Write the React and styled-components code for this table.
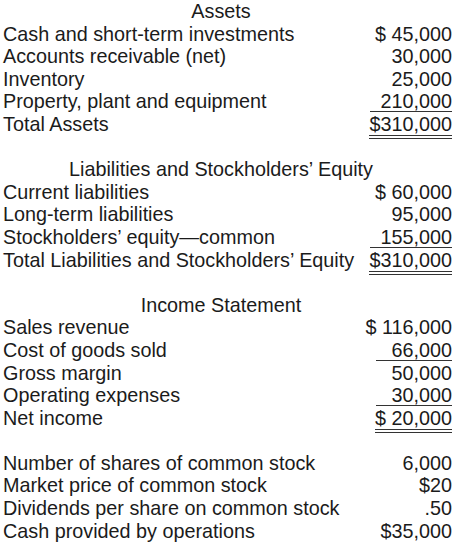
import React from 'react';
import styled, { createGlobalStyle } from 'styled-components';

const GlobalStyle = createGlobalStyle`
  body {
    margin: 0;
    background: #fff;
  }
`;

const Sheet = styled.div`
  padding: 0 7px 0 3px;
  font-family: "Liberation Sans", Arial, sans-serif;
  font-size: 19.8px;
  line-height: 22.6px;
  color: #1b1b1b;
`;

const Section = styled.section`
  margin-bottom: 22.6px;
`;

const Heading = styled.div`
  text-align: center;
  padding-right: 13px;
`;

const Row = styled.div`
  display: flex;
  justify-content: space-between;
  height: 22.6px;
  white-space: nowrap;
`;

const Label = styled.span``;

const Amount = styled.span`
  position: relative;
  flex-shrink: 0;
  min-width: ${(p) => p.$w || 82}px;
  text-align: right;

  &::after {
    content: '';
    display: ${(p) => (p.$rule ? 'block' : 'none')};
    position: absolute;
    left: 0;
    right: 0;
    top: ${(p) => (p.$rule === 'double' ? 22 : 21)}px;
    height: ${(p) => (p.$rule === 'double' ? '2px' : '0')};
    border-top: 1px solid #333;
    border-bottom: ${(p) => (p.$rule === 'double' ? '1px solid #333' : 'none')};
  }
`;

const sections = [
  {
    title: 'Assets',
    w: 82,
    rows: [
      ['Cash and short-term investments', '$ 45,000'],
      ['Accounts receivable (net)', '30,000'],
      ['Inventory', '25,000'],
      ['Property, plant and equipment', '210,000', 'single'],
      ['Total Assets', '$310,000', 'double'],
    ],
  },
  {
    title: 'Liabilities and Stockholders\u2019 Equity',
    w: 82,
    rows: [
      ['Current liabilities', '$ 60,000'],
      ['Long-term liabilities', '95,000'],
      ['Stockholders\u2019 equity\u2014common', '155,000', 'single'],
      ['Total Liabilities and Stockholders\u2019 Equity', '$310,000', 'double'],
    ],
  },
  {
    title: 'Income Statement',
    w: 76,
    rows: [
      ['Sales revenue', '$ 116,000'],
      ['Cost of goods sold', '66,000', 'single'],
      ['Gross margin', '50,000'],
      ['Operating expenses', '30,000', 'single'],
      ['Net income', '$ 20,000', 'double'],
    ],
  },
  {
    w: 82,
    rows: [
      ['Number of shares of common stock', '6,000'],
      ['Market price of common stock', '$20'],
      ['Dividends per share on common stock', '.50'],
      ['Cash provided by operations', '$35,000'],
    ],
  },
];

export default function App() {
  return (
    <>
      <GlobalStyle />
      <Sheet>
        {sections.map((s, i) => (
          <Section key={i}>
            {s.title && <Heading>{s.title}</Heading>}
            {s.rows.map(([label, value, rule]) => (
              <Row key={label}>
                <Label>{label}</Label>
                <Amount $w={s.w} $rule={rule}>{value}</Amount>
              </Row>
            ))}
          </Section>
        ))}
      </Sheet>
    </>
  );
}
